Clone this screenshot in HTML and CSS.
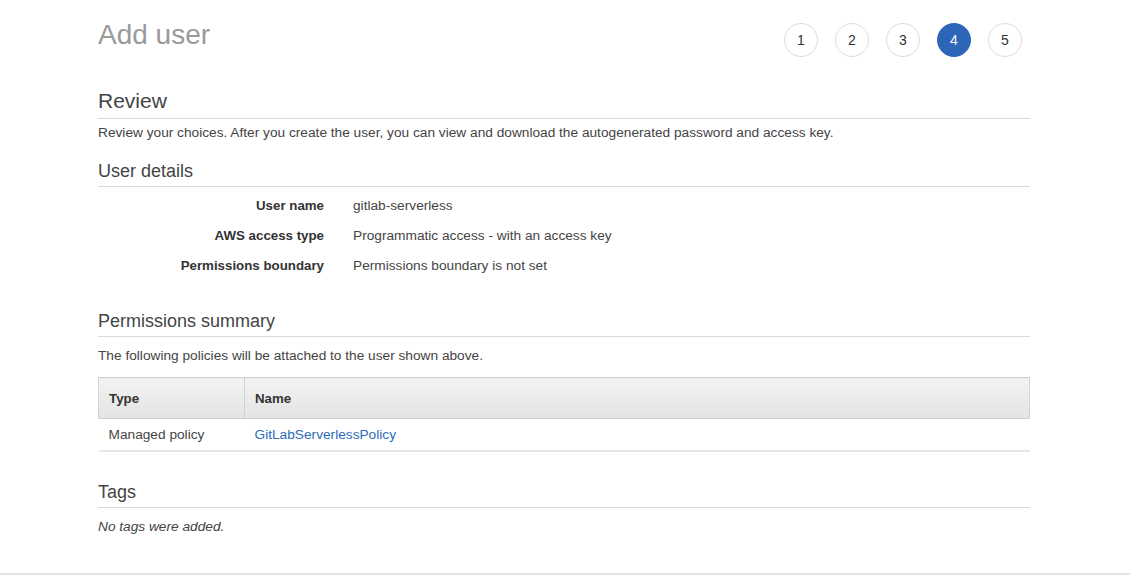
FILE: index.html
```html
<!DOCTYPE html>
<html lang="en">
<head>
<meta charset="utf-8">
<title>Add user</title>
<link rel="stylesheet" href="styles.css">
</head>
<body>
<div class="page">
  <header class="top">
    <h1 class="title">Add user</h1>
    <ol class="steps">
      <li class="step">1</li>
      <li class="step">2</li>
      <li class="step">3</li>
      <li class="step active">4</li>
      <li class="step">5</li>
    </ol>
  </header>

  <h2 class="section-title">Review</h2>
  <p class="intro">Review your choices. After you create the user, you can view and download the autogenerated password and access key.</p>

  <h3 class="sub-title">User details</h3>
  <div class="details">
    <div class="detail-row"><div class="label">User name</div><div class="value">gitlab-serverless</div></div>
    <div class="detail-row"><div class="label">AWS access type</div><div class="value">Programmatic access - with an access key</div></div>
    <div class="detail-row"><div class="label">Permissions boundary</div><div class="value">Permissions boundary is not set</div></div>
  </div>

  <h3 class="sub-title gap-lg">Permissions summary</h3>
  <p class="note">The following policies will be attached to the user shown above.</p>
  <table class="policies">
    <thead>
      <tr><th class="col-type">Type</th><th>Name</th></tr>
    </thead>
    <tbody>
      <tr><td>Managed policy</td><td><a class="link" href="#">GitLabServerlessPolicy</a></td></tr>
    </tbody>
  </table>

  <h3 class="sub-title gap-lg">Tags</h3>
  <p class="note empty">No tags were added.</p>
</div>
<div class="footer"></div>
</body>
</html>
```

FILE: styles.css
```css
html, body {
  margin: 0;
  padding: 0;
  background: #ffffff;
}
body {
  font-family: "Liberation Sans", Arial, Helvetica, sans-serif;
  color: #444;
  font-size: 13.7px;
}
.page {
  width: 932px;
  margin-left: 98px;
}
.top {
  display: flex;
  justify-content: space-between;
  align-items: flex-start;
  padding-top: 18px;
  height: 34px;
}
.title {
  margin: 0;
  font-size: 28px;
  line-height: 34px;
  font-weight: normal;
  color: #9a9a9a;
}
.steps {
  list-style: none;
  margin: 5px 8px 0 0;
  padding: 0;
  display: flex;
  gap: 17px;
}
.step {
  width: 32px;
  height: 32px;
  border: 1px solid #dcdcdc;
  border-radius: 50%;
  display: flex;
  align-items: center;
  justify-content: center;
  font-size: 14px;
  color: #333;
  background: #fff;
}
.step.active {
  background: #2d66b8;
  border-color: #2d66b8;
  color: #fff;
}
.section-title {
  margin: 37px 0 0 0;
  font-size: 21px;
  line-height: 24px;
  font-weight: normal;
  color: #444;
  padding-bottom: 5px;
  border-bottom: 1px solid #d9d9d9;
}
.intro {
  margin: 4px 0 0 0;
  line-height: 20px;
  color: #444;
}
.sub-title {
  margin: 17px 0 0 0;
  font-size: 18px;
  line-height: 22px;
  font-weight: normal;
  color: #444;
  padding-bottom: 4px;
  border-bottom: 1px solid #d9d9d9;
}
.sub-title.gap-lg {
  margin-top: 29px;
}
.details {
  margin-top: 4px;
}
.detail-row {
  display: flex;
  line-height: 30px;
}
.label {
  width: 226px;
  text-align: right;
  font-weight: bold;
  font-size: 13.3px;
  color: #333;
}
.value {
  margin-left: 29px;
  color: #444;
}
.note {
  margin: 9px 0 0 0;
  line-height: 20px;
  color: #444;
}
.note.empty {
  margin-top: 9px;
  font-style: italic;
}
.policies {
  margin-top: 11px;
  width: 100%;
  border-collapse: collapse;
  font-size: 13.7px;
}
.policies th {
  height: 40px;
  padding: 0 10px;
  text-align: left;
  font-weight: bold;
  font-size: 13.3px;
  color: #333;
  background: linear-gradient(#f3f3f3, #e3e3e3);
  border: 1px solid #d2d2d2;
}
.policies th.col-type {
  width: 125px;
}
.policies td {
  height: 31px;
  padding: 0 10px;
  border-bottom: 2px solid #e6e6e6;
  color: #444;
}
.link {
  color: #2e6bb8;
  text-decoration: none;
}
.footer {
  margin-top: 36px;
  border-top: 2px solid #e3e3e3;
  height: 10px;
}
```
